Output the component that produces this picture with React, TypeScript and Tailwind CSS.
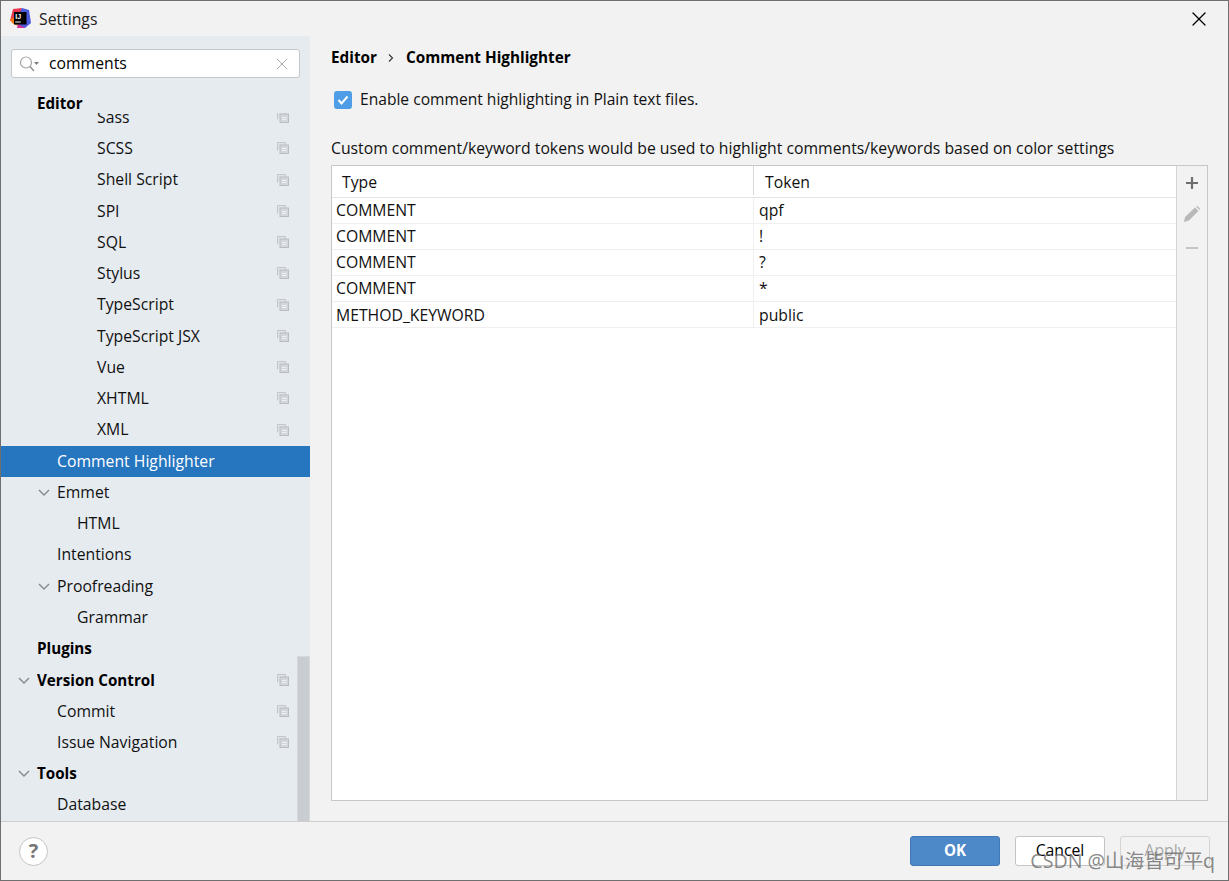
import { X } from "lucide-react";

const FONT = "font-['Open_Sans','Noto_Sans',sans-serif]";

interface TreeRow {
  label: string;
  indent: number;
  bold?: boolean;
  open?: boolean;
  copy?: boolean;
  selected?: boolean;
}

const rows: TreeRow[] = [
  { label: "Sass", indent: 97, copy: true },
  { label: "SCSS", indent: 97, copy: true },
  { label: "Shell Script", indent: 97, copy: true },
  { label: "SPI", indent: 97, copy: true },
  { label: "SQL", indent: 97, copy: true },
  { label: "Stylus", indent: 97, copy: true },
  { label: "TypeScript", indent: 97, copy: true },
  { label: "TypeScript JSX", indent: 97, copy: true },
  { label: "Vue", indent: 97, copy: true },
  { label: "XHTML", indent: 97, copy: true },
  { label: "XML", indent: 97, copy: true },
  { label: "Comment Highlighter", indent: 57, selected: true },
  { label: "Emmet", indent: 57, open: true },
  { label: "HTML", indent: 77 },
  { label: "Intentions", indent: 57 },
  { label: "Proofreading", indent: 57, open: true },
  { label: "Grammar", indent: 77 },
  { label: "Plugins", indent: 37, bold: true },
  { label: "Version Control", indent: 37, bold: true, open: true, copy: true },
  { label: "Commit", indent: 57, copy: true },
  { label: "Issue Navigation", indent: 57, copy: true },
  { label: "Tools", indent: 37, bold: true, open: true },
  { label: "Database", indent: 57 },
];

const tokens = [
  ["COMMENT", "qpf"],
  ["COMMENT", "!"],
  ["COMMENT", "?"],
  ["COMMENT", "*"],
  ["METHOD_KEYWORD", "public"],
];

function CopyIcon() {
  return (
    <svg width="12" height="12" viewBox="0 0 12 12" className="-mt-[1px] shrink-0">
      <path d="M0.5 8.5V0.5H8.5V3" fill="#dfe3e7" stroke="#c2c6ca" />
      <rect x="3" y="3" width="8.5" height="8.5" fill="#d3d7db" stroke="#b9bdc1" />
      <path d="M5 6.5H9.5M5 8.5H9.5" stroke="#eef0f2" />
    </svg>
  );
}

function Logo() {
  return (
    <svg width="21" height="21" viewBox="0 0 21 21" className="shrink-0">
      <path d="M3 1L12 0L9 12L0 13Z" fill="#e8364f" />
      <path d="M0 11L6 9L8 18L2 15Z" fill="#f97a12" />
      <path d="M12 0L19 2L21 15L15 20L8 19L7 10Z" fill="#4a5be0" />
      <path d="M8 16L15 20L7 20Z" fill="#d6318f" />
      <rect x="4" y="4" width="12.5" height="12.5" fill="#000" />
      <text x="5.2" y="10.5" fontSize="7" fontWeight="700" fill="#fff" fontFamily="'Liberation Sans',sans-serif">
        IJ
      </text>
      <rect x="5.2" y="13.5" width="5.5" height="1" fill="#fff" />
    </svg>
  );
}

function Row({ row }: { row: TreeRow }) {
  return (
    <div
      className={`relative flex h-[31.25px] shrink-0 items-center justify-between pr-[21px] ${
        row.selected ? "bg-[#2675bf] text-white" : "text-[#111]"
      }`}
      style={{ paddingLeft: row.indent - 1 }}
    >
      {row.open && (
        <svg
          width="12"
          height="7"
          viewBox="0 0 12 7"
          className="absolute top-[12px]"
          style={{ left: row.indent - 20 }}
        >
          <path d="M1 1L6 6L11 1" fill="none" stroke="#85898d" strokeWidth="1.4" />
        </svg>
      )}
      <span className={row.bold ? "text-[15.2px] font-bold text-black" : ""}>{row.label}</span>
      {row.copy && <CopyIcon />}
    </div>
  );
}

export default function App() {
  return (
    <div
      className={`${FONT} relative flex h-[881px] w-[1229px] flex-col overflow-hidden border border-[#6f6f6f] bg-[#f2f2f2] text-[15.75px] leading-none text-[#111]`}
    >
      {/* title bar */}
      <div className="flex h-[35px] shrink-0 items-center pl-[9px] pr-[17px]">
        <Logo />
        <span className="ml-[8px] pt-[3px] text-[#222]">Settings</span>
        <X size={24} strokeWidth={1.3} className="ml-auto text-black" />
      </div>

      <div className="flex min-h-0 flex-1">
        {/* sidebar */}
        <div className="relative flex w-[309px] shrink-0 flex-col overflow-hidden bg-[#e6ebf0]">
          <div className="mx-[10px] mt-[13px] flex h-[29px] shrink-0 items-center rounded-[3px] border border-[#c4c7ca] bg-white pl-[7px] pr-[7px]">
            <svg width="21" height="18" viewBox="0 0 21 18" className="shrink-0">
              <circle cx="7" cy="7.5" r="5.5" fill="none" stroke="#a3a6a9" strokeWidth="1.2" />
              <path d="M11 11.5L15 16" stroke="#8c8f92" strokeWidth="1.4" />
              <path d="M15 7H20L17.5 10Z" fill="#7c7f82" />
            </svg>
            <span className="ml-[9px] text-black">comments</span>
            <X size={20} strokeWidth={1.2} className="ml-auto text-[#a8abae]" />
          </div>
          <div className="z-10 flex h-[35px] shrink-0 items-end bg-[#e6ebf0] pl-[36px] text-[15.2px] font-bold text-black">
            <span className="pb-[2px]">Editor</span>
          </div>
          <div className="flex min-h-0 flex-1 flex-col overflow-hidden">
            <div className="-mt-[11px] flex flex-col">
              {rows.map((row) => (
                <Row key={row.label} row={row} />
              ))}
            </div>
          </div>
          {/* scrollbar thumb */}
          <div className="absolute bottom-0 right-0 h-[165px] w-[13px] border border-b-0 border-[#d6d9dc] bg-[#c9cdd1]" />
        </div>

        {/* content */}
        <div className="flex min-w-0 flex-1 flex-col pl-[21px] pr-[20px]">
          <div className="mt-[12px] flex h-[20px] items-center text-[15.3px] font-bold text-black">
            <span>Editor</span>
            <svg width="8" height="10" viewBox="0 0 8 10" className="ml-[10px] mr-[11px]">
              <path d="M2 1.5L5.5 5L2 8.5" fill="none" stroke="#333" strokeWidth="1.1" />
            </svg>
            <span>Comment Highlighter</span>
          </div>
          <div className="mt-[22px] flex h-[20px] items-center pl-[3px]">
            <div className="flex h-[18px] w-[18px] items-center justify-center rounded-[3px] bg-[#4e9de6]">
              <svg width="12" height="10" viewBox="0 0 12 10">
                <path d="M1.5 5L4.5 8.5L10.5 1.5" fill="none" stroke="#fff" strokeWidth="2" />
              </svg>
            </div>
            <span className="ml-[8px] text-[15.6px]">Enable comment highlighting in Plain text files.</span>
          </div>
          <div className="mt-[28px] h-[20px] leading-[20px]">
            Custom comment/keyword tokens would be used to highlight comments/keywords based on color settings
          </div>

          {/* table */}
          <div className="mt-[7px] flex h-[636px] border border-[#c8c8c8] bg-white">
            <div className="flex min-w-0 flex-1 flex-col">
              <div className="flex h-[32px] shrink-0 items-start border-b border-[#e4e4e4]">
                <div className="flex h-[29px] w-[422px] items-center border-r border-[#d9d9d9] pl-[10px] pt-[5px]">
                  Type
                </div>
                <div className="flex h-[29px] items-center pl-[11px] pt-[5px]">Token</div>
              </div>
              {tokens.map(([type, token], i) => (
                <div key={i} className="flex h-[26.1px] shrink-0 items-center border-b border-[#f0f0f0]">
                  <div className="flex h-full w-[422px] items-center border-r border-[#f0f0f0] pl-[4px] pt-[1px]">
                    {type}
                  </div>
                  <div className="pl-[5px] pt-[1px]">{token}</div>
                </div>
              ))}
            </div>
            <div className="flex w-[31px] shrink-0 flex-col items-center border-l border-[#d4d4d4] bg-[#f2f2f2] pt-[10px]">
              <svg width="14" height="14" viewBox="0 0 14 14">
                <path d="M7 1V13M1 7H13" stroke="#6e6e6e" strokeWidth="2.2" />
              </svg>
              <svg width="18" height="18" viewBox="0 0 18 18" className="mt-[15px]">
                <path d="M1 17L2 12L12 2.5L15.5 6L6 15.5Z" fill="#b9b9b9" />
                <path d="M13 1.5L14.5 1L17 3.5L16.5 5Z" fill="#b9b9b9" />
              </svg>
              <svg width="14" height="4" viewBox="0 0 14 4" className="mt-[23px]">
                <path d="M1 2H13" stroke="#c4c4c4" strokeWidth="2" />
              </svg>
            </div>
          </div>
        </div>
      </div>

      {/* footer */}
      <div className="flex h-[59px] shrink-0 items-center border-t border-[#cfcfcf] pl-[18px] pr-[18px]">
        <div className="flex h-[29px] w-[29px] items-center justify-center rounded-full border border-[#c4c4c4] bg-white text-[20px] font-bold text-[#777]">
          ?
        </div>
        <div className="ml-auto flex gap-[15px]">
          <div className="flex h-[30px] w-[90px] items-center justify-center rounded-[3px] border border-[#4279b5] bg-[#4d88c9] text-[15.2px] font-bold text-white">
            OK
          </div>
          <div className="flex h-[30px] w-[90px] items-center justify-center rounded-[3px] border border-[#c4c4c4] bg-white text-black">
            Cancel
          </div>
          <div className="flex h-[30px] w-[90px] items-center justify-center rounded-[3px] border border-[#d4d4d4] text-[#a8a8a8]">
            Apply
          </div>
        </div>
      </div>

      {/* CSDN watermark over the buttons */}
      <div className="pointer-events-none absolute bottom-[7px] right-[13px] font-['Open_Sans','Noto_Sans_CJK_SC',sans-serif] text-[19.6px] leading-[24px] text-[#6a6a6a]/80">
        CSDN @山海皆可平q
      </div>
    </div>
  );
}
